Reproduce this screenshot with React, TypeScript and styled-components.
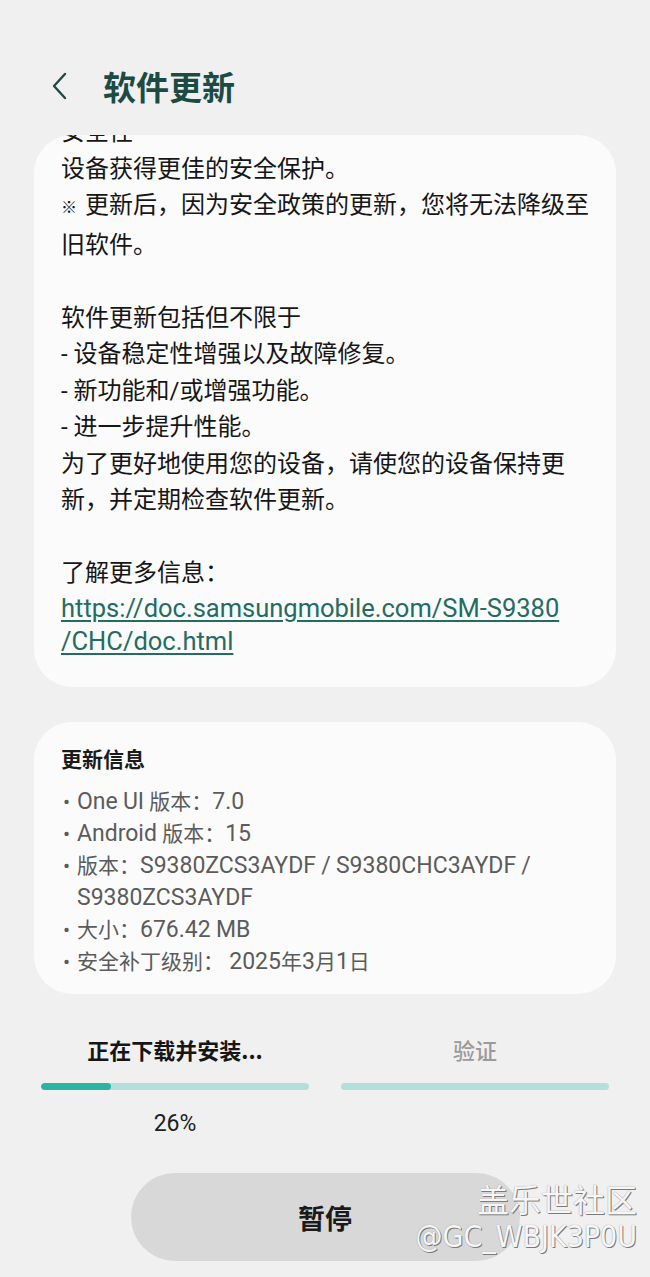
import React from "react";
import styled, { createGlobalStyle } from "styled-components";

const GlobalStyle = createGlobalStyle`
  html, body { margin: 0; padding: 0; background: #f0f0f0; }
  body { font-family: Roboto, "Noto Sans CJK SC", sans-serif; }
  * { box-sizing: border-box; }
`;

const Page = styled.div`
  position: relative;
  width: 650px;
  height: 1277px;
  overflow: hidden;
  background: #f0f0f0;
  font-family: Roboto, "Noto Sans CJK SC", sans-serif;
`;

const Header = styled.header`
  height: 135px;
  display: flex;
  align-items: flex-start;
  padding: 66px 0 0 50px;
  gap: 35px;
`;

const BackButton = styled.button`
  border: 0;
  background: none;
  padding: 0;
  width: 18px;
  height: 40px;
  display: flex;
  align-items: center;
  justify-content: center;
`;

const Title = styled.h1`
  margin: 0;
  font-size: 33px;
  line-height: 40px;
  font-weight: 700;
  color: #1c4b44;
  font-family: "Noto Sans CJK SC", sans-serif;
`;

const Card = styled.section`
  margin: 0 34px;
  background: #fbfbfb;
  border-radius: 38px;
  overflow: hidden;
`;

const NotesCard = styled(Card)`
  height: 552px;
  padding: 0 27px;
`;

const NotesInner = styled.div`
  margin-top: -21px;
  font-size: 24px;
  line-height: 36.5px;
  color: #161616;
  font-family: Roboto, "Noto Sans CJK SC", sans-serif;
`;

const Line = styled.div`
  white-space: nowrap;
  min-height: 36.5px;
`;

const Mark = styled.span`
  font-size: 16px;
  margin-right: 8px;
`;

const Link = styled.a`
  display: block;
  color: #246c62;
  text-decoration: underline;
  text-underline-offset: 3px;
  text-decoration-thickness: 1.5px;
  font-size: 25.5px;
  line-height: 33px;
  font-family: Roboto, sans-serif;
`;

const InfoCard = styled(Card)`
  margin-top: 35px;
  height: 272px;
  padding: 21px 27px 0;
`;

const InfoTitle = styled.h2`
  margin: 0 0 13px;
  font-size: 21px;
  line-height: 30px;
  font-weight: 700;
  color: #1a1a1a;
  font-family: "Noto Sans CJK SC", sans-serif;
`;

const InfoList = styled.ul`
  margin: 0;
  padding: 0;
  list-style: none;
`;

const InfoItem = styled.li`
  display: flex;
  font-size: 21px;
  line-height: 32px;
  color: #5b5b5b;
`;

const Latin = styled.span`
  font-size: 23px;
  font-family: Roboto, sans-serif;
`;

const Bullet = styled.span`
  width: 16px;
  flex: none;
  padding-left: 2px;
`;

const Progress = styled.div`
  margin: 40px 41px 0;
  display: grid;
  grid-template-columns: 1fr 1fr;
  column-gap: 32px;
`;

const Step = styled.div`
  display: flex;
  flex-direction: column;
  align-items: center;
`;

const StepLabel = styled.div<{ $active?: boolean }>`
  font-size: 22px;
  line-height: 30px;
  font-weight: ${(p) => (p.$active ? 700 : 500)};
  color: ${(p) => (p.$active ? "#161616" : "#9a9a9a")};
  font-family: "Noto Sans CJK SC", sans-serif;
`;

const Track = styled.div`
  margin-top: 19px;
  width: 100%;
  height: 7px;
  border-radius: 4px;
  background: #b4dfdb;
  overflow: hidden;
`;

const Fill = styled.div`
  height: 100%;
  border-radius: 4px;
  background: #2ab4a4;
`;

const Percent = styled.div`
  margin-top: 19px;
  font-size: 23px;
  line-height: 30px;
  color: #1e1e1e;
`;

const ButtonRow = styled.div`
  display: flex;
  justify-content: center;
  margin-top: 34px;
`;

const PauseButton = styled.button`
  width: 389px;
  height: 88px;
  border: 0;
  border-radius: 44px;
  background: #d8d8d8;
  font-size: 27px;
  font-weight: 700;
  color: #1a1a1a;
  font-family: "Noto Sans CJK SC", sans-serif;
`;

const Watermark = styled.div`
  position: absolute;
  right: 13px;
  top: 1177px;
  display: flex;
  flex-direction: column;
  align-items: flex-end;
  color: #f6f6f6;
  text-shadow: 1px 1px 0 #7a7a7a, 0 0 1px #8a8a8a;
  pointer-events: none;
`;

const WmTitle = styled.div`
  font-size: 32px;
  line-height: 42px;
  font-family: "Noto Sans CJK SC", sans-serif;
`;

const WmUser = styled.div`
  font-size: 30px;
  line-height: 36px;
  font-family: "Liberation Sans Narrow", "DejaVu Sans Condensed", sans-serif;
  font-stretch: condensed;
`;

const info = [
  "One UI 版本：7.0",
  "Android 版本：15",
  "版本：S9380ZCS3AYDF / S9380CHC3AYDF / S9380ZCS3AYDF",
  "大小：676.42 MB",
  "安全补丁级别： 2025年3月1日",
];

function Mixed({ text }: { text: string }) {
  const parts = text.split(/([A-Za-z0-9.\/_%-]+)/).filter(Boolean);
  return (
    <span>
      {parts.map((p, i) =>
        /^[A-Za-z0-9.\/_%-]/.test(p) ? <Latin key={i}>{p}</Latin> : <React.Fragment key={i}>{p}</React.Fragment>
      )}
    </span>
  );
}

export default function App() {
  const pct = 26;
  return (
    <Page>
      <GlobalStyle />
      <Header>
        <BackButton aria-label="返回">
          <svg width="16" height="28" viewBox="0 0 16 28" fill="none">
            <path d="M14 2 L3 14 L14 26" stroke="#1d4a43" strokeWidth="2.4" strokeLinecap="round" strokeLinejoin="round" />
          </svg>
        </BackButton>
        <Title>软件更新</Title>
      </Header>

      <NotesCard>
        <NotesInner>
          <Line>安全性</Line>
          <Line>设备获得更佳的安全保护。</Line>
          <Line>
            <Mark>※</Mark>更新后，因为安全政策的更新，您将无法降级至
          </Line>
          <Line>旧软件。</Line>
          <Line />
          <Line>软件更新包括但不限于</Line>
          <Line>- 设备稳定性增强以及故障修复。</Line>
          <Line>- 新功能和/或增强功能。</Line>
          <Line>- 进一步提升性能。</Line>
          <Line>为了更好地使用您的设备，请使您的设备保持更</Line>
          <Line>新，并定期检查软件更新。</Line>
          <Line />
          <Line>了解更多信息：</Line>
          <Link href="#">
            https://doc.samsungmobile.com/SM-S9380
            <br />
            /CHC/doc.html
          </Link>
        </NotesInner>
      </NotesCard>

      <InfoCard>
        <InfoTitle>更新信息</InfoTitle>
        <InfoList>
          {info.map((t) => (
            <InfoItem key={t}>
              <Bullet>•</Bullet>
              <Mixed text={t} />
            </InfoItem>
          ))}
        </InfoList>
      </InfoCard>

      <Progress>
        <Step>
          <StepLabel $active>正在下载并安装...</StepLabel>
          <Track>
            <Fill style={{ width: `${pct}%` }} />
          </Track>
          <Percent>{pct}%</Percent>
        </Step>
        <Step>
          <StepLabel>验证</StepLabel>
          <Track />
        </Step>
      </Progress>

      <ButtonRow>
        <PauseButton>暂停</PauseButton>
      </ButtonRow>

      <Watermark>
        <WmTitle>盖乐世社区</WmTitle>
        <WmUser>@GC_WBJK3P0U</WmUser>
      </Watermark>
    </Page>
  );
}
